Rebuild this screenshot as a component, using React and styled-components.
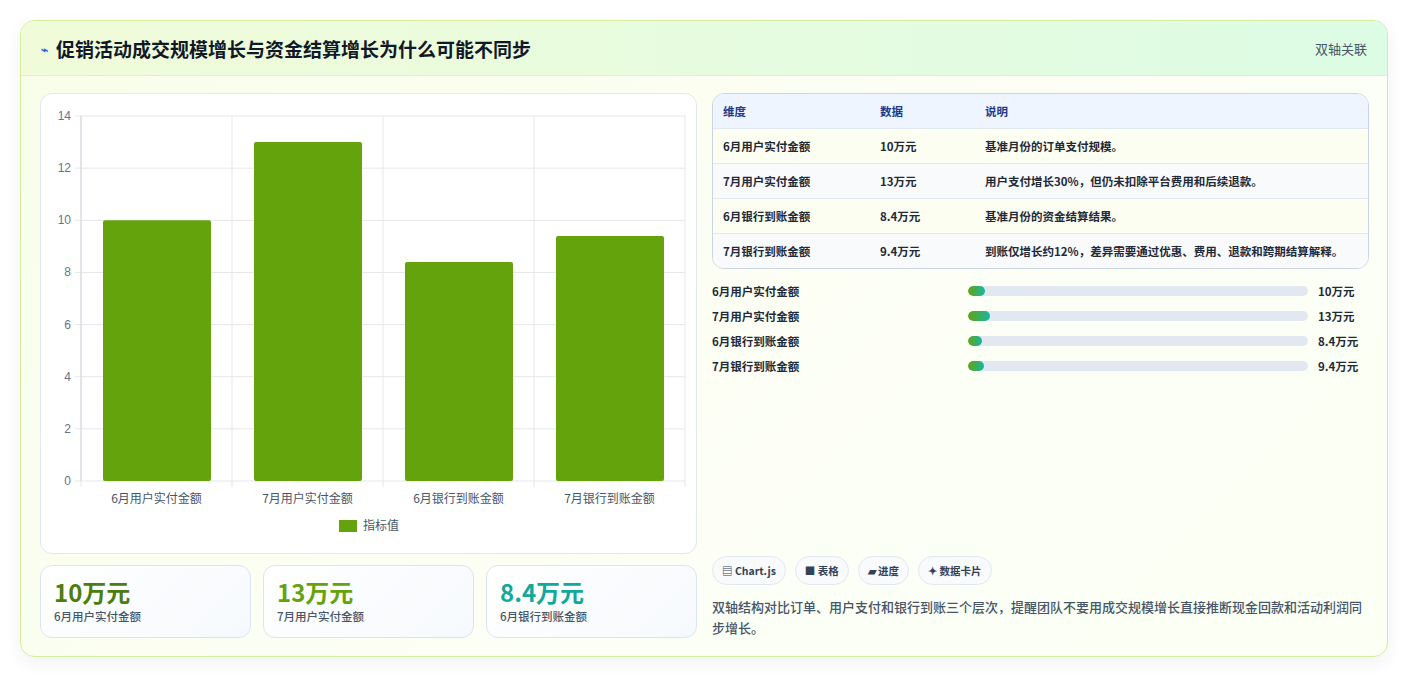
import React from "react";
import styled, { createGlobalStyle } from "styled-components";

const G = createGlobalStyle`
  body{margin:0;background:#fff;font-family:"Noto Sans CJK SC","Noto Sans",sans-serif;color:#1f2937;}
`;
const Page = styled.div`padding:20px 20px 20px 20px;`;
const Card = styled.div`
  border:1px solid #d4ee9c;border-radius:14px;overflow:hidden;
  background:linear-gradient(135deg,#f8fde9,#fdfff6 60%,#fbfff4);
  box-shadow:0 6px 18px rgba(0,0,0,0.06);height:637px;box-sizing:border-box;display:flex;flex-direction:column;
`;
const Header = styled.div`
  height:55px;box-sizing:border-box;border-bottom:1px solid #e2f0cc;display:flex;align-items:center;justify-content:space-between;
  padding:0 20px;background:linear-gradient(90deg,#f1fbd9,#dcfce4);
`;
const Title = styled.h1`margin:0;font-size:19px;font-weight:700;color:#111827;display:flex;align-items:center;gap:8px;`;
const Tag = styled.span`font-size:13px;color:#4b5563;`;
const Body = styled.div`flex:1;display:grid;grid-template-columns:657px 657px;gap:15px;padding:17px 19px 18px 19px;`;
const Col = styled.div`display:flex;flex-direction:column;gap:11px;min-height:0;`;
const ChartBox = styled.div`height:461px;background:#fff;border:1px solid #e2e8f0;border-radius:12px;box-sizing:border-box;overflow:hidden;`;
const Stats = styled.div`display:grid;grid-template-columns:repeat(3,1fr);gap:12px;`;
const Stat = styled.div`height:73px;box-sizing:border-box;border:1px solid #dbe5f0;border-radius:12px;background:linear-gradient(135deg,#fff,#f6f9fd);padding:10px 13px;`;
const StatV = styled.div`font-size:24px;font-weight:700;color:${p=>p.c};line-height:32px;`;
const StatL = styled.div`font-size:11.5px;color:#475569;font-weight:500;`;
const Table = styled.div`border:1px solid #cbd5e1;border-radius:12px;overflow:hidden;background:#fff;`;
const Row = styled.div`display:grid;grid-template-columns:157px 105px 1fr;padding:0 10px;min-height:34px;align-items:center;
  font-size:11.5px;font-weight:${p=>p.h?700:600};color:${p=>p.h?"#1e3a8a":"#1f2937"};
  background:${p=>p.h?"#eef5ff":p.alt?"#f8fafc":"#fbfef0"};border-top:${p=>p.first?"none":"1px solid #e2e8f0"};
  & > span{padding:6px 0;}`;
const Bars = styled.div`display:flex;flex-direction:column;gap:7px;padding-top:2px;`;
const BarRow = styled.div`display:grid;grid-template-columns:246px 340px 1fr;gap:0 10px;align-items:center;font-size:11.5px;font-weight:700;color:#1f2937;height:18px;`;
const Track = styled.div`height:10px;background:#e2e8f0;border-radius:5px;overflow:hidden;`;
const Fill = styled.div`height:100%;border-radius:5px;background:linear-gradient(90deg,#65a30d,#14b8a6);`;
const Spacer = styled.div`flex:1;`;
const Chips = styled.div`display:flex;gap:9px;`;
const Chip = styled.span`font-size:10.5px;font-weight:700;color:#334155;border:1px solid #e2e8f0;border-radius:15px;background:#f8fafc;padding:6px 9px;`;
const Note = styled.p`margin:0;font-size:13px;color:#475569;line-height:21px;font-weight:500;`;

const cats=["6月用户实付金额","7月用户实付金额","6月银行到账金额","7月银行到账金额"];
const vals=[10,13,8.4,9.4];
const X0=40,Y0=387,U=26.07,CW=151;

function Chart(){
  return (
    <svg width="656" height="461" viewBox="0 0 656 461" style={{display:"block"}}>
      {[0,2,4,6,8,10,12,14].map(t=>{const y=Y0-t*U;return <g key={t}>
        <line x1={X0-6} x2={644} y1={y} y2={y} stroke="#e5e7eb"/>
        <text x={X0-10} y={y+4} textAnchor="end" fontSize="12" fill="#64748b" fontFamily="Liberation Sans">{t}</text></g>})}
      {[0,1,2,3,4].map(i=><line key={i} x1={X0+i*CW} x2={X0+i*CW} y1={Y0-14*U} y2={Y0+6} stroke="#e5e7eb"/>)}
      <line x1={X0} x2={X0} y1={Y0-14*U} y2={Y0} stroke="#d1d5db"/>
      {vals.map((v,i)=><g key={i}>
        <rect x={X0+i*CW+22} y={Y0-v*U} width={108} height={v*U} rx="2" fill="#65a30d"/>
        <text x={X0+i*CW+CW/2} y={Y0+22} textAnchor="middle" fontSize="12" fill="#475569" fontFamily="Noto Sans CJK SC">{cats[i]}</text>
      </g>)}
      <rect x={298} y={426} width={18} height={12} fill="#65a30d"/>
      <text x={322} y={436} fontSize="12" fill="#475569" fontFamily="Noto Sans CJK SC">指标值</text>
    </svg>
  );
}

const rows=[["6月用户实付金额","10万元","基准月份的订单支付规模。"],["7月用户实付金额","13万元","用户支付增长30%，但仍未扣除平台费用和后续退款。"],["6月银行到账金额","8.4万元","基准月份的资金结算结果。"],["7月银行到账金额","9.4万元","到账仅增长约12%，差异需要通过优惠、费用、退款和跨期结算解释。"]];

export default function App(){
  return <Page><G/>
    <Card>
      <Header><Title><span style={{fontSize:12,color:"#2563eb"}}>⌁</span>促销活动成交规模增长与资金结算增长为什么可能不同步</Title><Tag>双轴关联</Tag></Header>
      <Body>
        <Col>
          <ChartBox><Chart/></ChartBox>
          <Stats>
            <Stat><StatV c="#4d7c0f">10万元</StatV><StatL>6月用户实付金额</StatL></Stat>
            <Stat><StatV c="#65a30d">13万元</StatV><StatL>7月用户实付金额</StatL></Stat>
            <Stat><StatV c="#14a89a">8.4万元</StatV><StatL>6月银行到账金额</StatL></Stat>
          </Stats>
        </Col>
        <Col>
          <Table>
            <Row h first><span>维度</span><span>数据</span><span>说明</span></Row>
            {rows.map((r,i)=><Row key={i} alt={i%2===1}><span>{r[0]}</span><span>{r[1]}</span><span>{r[2]}</span></Row>)}
          </Table>
          <Bars>
            {rows.map((r,i)=><BarRow key={i}><span>{r[0]}</span><Track><Fill style={{width:`${vals[i]/2}%`}}/></Track><span>{r[1]}</span></BarRow>)}
          </Bars>
          <Spacer/>
          <Chips><Chip>▤ Chart.js</Chip><Chip>■ 表格</Chip><Chip>▰ 进度</Chip><Chip>✦ 数据卡片</Chip></Chips>
          <Note>双轴结构对比订单、用户支付和银行到账三个层次，提醒团队不要用成交规模增长直接推断现金回款和活动利润同步增长。</Note>
        </Col>
      </Body>
    </Card>
  </Page>;
}
